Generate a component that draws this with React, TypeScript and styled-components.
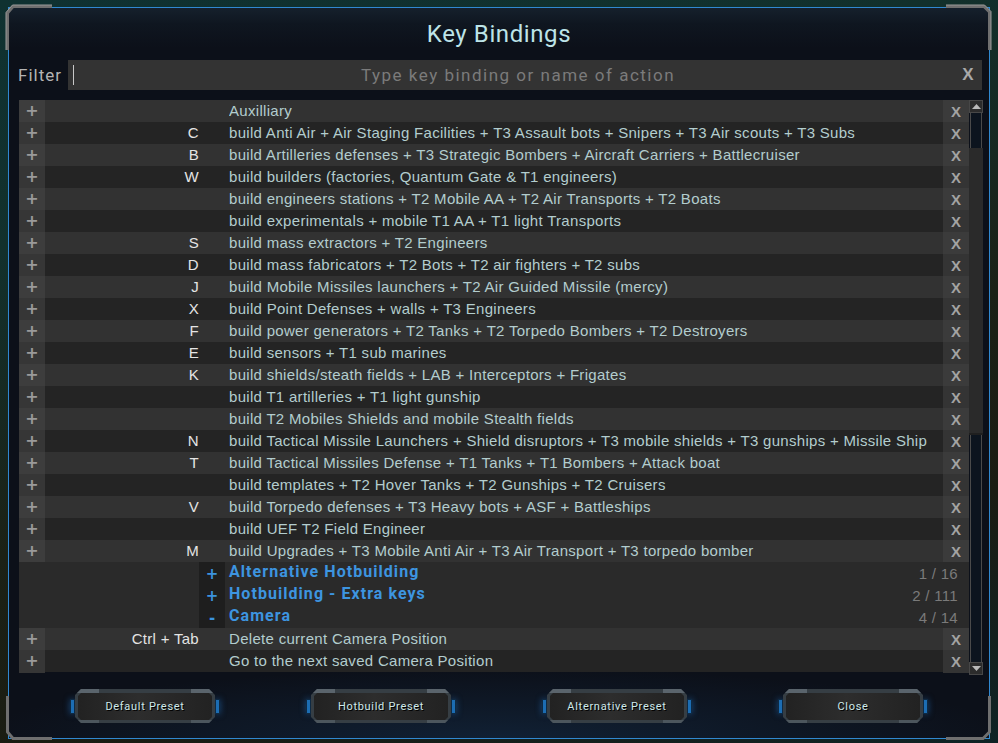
import React from 'react';
import styled, { createGlobalStyle } from 'styled-components';

const Global = createGlobalStyle`
  html, body { margin: 0; padding: 0; }
  body { background: #0f2628; overflow: hidden; }
  * { box-sizing: border-box; }
`;

const Screen = styled.div`
  position: relative;
  width: 998px;
  height: 743px;
  padding: 7px 8px 4px 8px;
  background: linear-gradient(165deg, #0f3131 0%, #12302c 25%, #1b2116 55%, #1a1c12 75%, #0e2325 100%);
  font-family: 'Liberation Sans', Arial, sans-serif;
`;

const Panel = styled.div`
  width: 982px;
  height: 732px;
  border: 1px solid #3088d0;
  background:
    radial-gradient(ellipse 520px 70px at 50% 100%, rgba(22, 52, 84, 0.45), transparent),
    linear-gradient(180deg, #15202c 0px, #0f1620 16px, #0c1019 40px, #0c1019 100%);
  display: flex;
  flex-direction: column;
`;

const Title = styled.div`
  height: 52px;
  display: flex;
  align-items: center;
  justify-content: center;
  padding-bottom: 1px;
  font-family: Roboto, 'Noto Sans', sans-serif;
  font-size: 24px;
  font-weight: 400;
  color: #bde4e8;
  letter-spacing: 0.6px;
`;

const FilterRow = styled.div`
  height: 30px;
  display: flex;
  align-items: stretch;
  padding-left: 9px;
  margin-right: 7px;
  margin-bottom: 10px;
`;

const FilterLabel = styled.div`
  width: 50px;
  display: flex;
  align-items: center;
  font-family: Roboto, 'Noto Sans', sans-serif;
  font-size: 17px;
  letter-spacing: 1px;
  color: #b4b4b4;
`;

const FilterBox = styled.div`
  flex: 1;
  background: #333333;
  display: grid;
  grid-template-columns: 14px 1fr 28px;
  align-items: center;
`;

const Caret = styled.div`
  width: 1px;
  height: 20px;
  margin-left: 5px;
  background: #c8c8c8;
`;

const Placeholder = styled.div`
  text-align: center;
  font-family: Roboto, 'Noto Sans', sans-serif;
  font-size: 17px;
  letter-spacing: 1.5px;
  color: #7b7b7b;
`;

const ClearX = styled.div`
  text-align: center;
  font-family: 'Liberation Sans', Arial, sans-serif;
  font-weight: 700;
  font-size: 17px;
  color: #a9a9a9;
`;

const ListArea = styled.div`
  height: 572px;
  margin-left: 10px;
  margin-right: 6px;
  display: flex;
  align-items: flex-start;
`;

const Rows = styled.div`
  width: 950px;
  display: flex;
  flex-direction: column;
`;

const Row = styled.div<{ $light: boolean }>`
  height: 22px;
  display: grid;
  grid-template-columns: 26px 154px 30px 1fr 26px;
  align-items: stretch;
  background: ${(p) => (p.$light ? '#323232' : '#242424')};
  font-size: 15px;
  line-height: 22px;
  letter-spacing: 0.3px;
`;

const PlusCell = styled.div<{ $light: boolean }>`
  background: ${(p) => (p.$light ? '#3d3d3d' : '#363636')};
  color: #9a9a9a;
  font-family: 'DejaVu Sans', sans-serif;
  font-weight: 700;
  font-size: 16px;
  line-height: 22px;
  text-align: center;
  letter-spacing: 0;
`;

const KeyCell = styled.div`
  text-align: right;
  color: #e4e4e4;
  white-space: nowrap;
`;

const ActionCell = styled.div`
  color: #b3cdce;
  white-space: nowrap;
  overflow: hidden;
`;

const XCell = styled.div<{ $light: boolean }>`
  background: ${(p) => (p.$light ? '#3b3b3b' : '#343434')};
  color: #a3a3a3;
  font-weight: 700;
  font-size: 15px;
  line-height: 23px;
  text-align: center;
  letter-spacing: 0;
`;

const CatRow = styled.div`
  height: 22px;
  display: grid;
  grid-template-columns: 180px 26px 1fr auto;
  background: #2a2a2a;
`;

const CatSign = styled.div`
  background: #1e1e1e;
  color: #3b93de;
  font-family: 'DejaVu Sans', sans-serif;
  font-weight: 700;
  font-size: 15px;
  line-height: 24px;
  text-align: center;
`;

const CatName = styled.div`
  padding-left: 4px;
  color: #3d95e0;
  font-family: Roboto, 'Noto Sans', sans-serif;
  font-weight: 700;
  font-size: 16px;
  letter-spacing: 1.05px;
  line-height: 20px;
`;

const CatCount = styled.div`
  padding-right: 11px;
  color: #7a7a7a;
  font-size: 15px;
  letter-spacing: 0.3px;
  line-height: 24px;
`;

const Scrollbar = styled.div`
  width: 14px;
  height: 575px;
  display: flex;
  flex-direction: column;
`;

const ArrowBtn = styled.div`
  height: 13px;
  background: #2c2c2c;
  border: 1px solid #474747;
  display: flex;
  align-items: center;
  justify-content: center;
`;

const Track = styled.div`
  flex: 1;
  display: flex;
  flex-direction: column;
`;

const TrackGap = styled.div<{ $grow?: boolean }>`
  height: ${(p) => (p.$grow ? 'auto' : '35px')};
  flex: ${(p) => (p.$grow ? 1 : 'none')};
  margin: 0 1px;
  border-left: 1px solid #4a4a4a;
  border-right: 1px solid #4a4a4a;
  background: #0c141e;
`;

const Thumb = styled.div`
  height: 287px;
  background: #2a2a2a;
  border-bottom: 2px solid #1f1f1f;
`;

const Footer = styled.div`
  flex: 1;
  display: flex;
  align-items: flex-start;
  padding-top: 17px;
  padding-left: 61px;
  gap: 86px;
`;

const Btn = styled.div`
  width: 150px;
  height: 34px;
  display: flex;
  align-items: center;
`;

const BlueTab = styled.div`
  width: 5px;
  height: 15px;
  background: #1c6db3;
  border: 1px solid #0e2a44;
  box-shadow: 0 0 6px rgba(40, 130, 220, 0.5);
`;

const Frame = styled.div`
  flex: 1;
  height: 34px;
  padding: 4px 3px 3px 3px;
  clip-path: polygon(6px 0, calc(100% - 6px) 0, 100% 6px, 100% calc(100% - 6px), calc(100% - 6px) 100%, 6px 100%, 0 calc(100% - 6px), 0 6px);
  background:
    linear-gradient(90deg, #5a646c 0 24px, transparent 24px calc(100% - 24px), #5a646c calc(100% - 24px)) top / 100% 4px no-repeat,
    linear-gradient(90deg, #4c565d 0 24px, transparent 24px calc(100% - 24px), #4c565d calc(100% - 24px)) bottom / 100% 3px no-repeat,
    #363e44;
`;

const FrameInner = styled.div`
  height: 100%;
  clip-path: polygon(3px 0, calc(100% - 3px) 0, 100% 3px, 100% calc(100% - 3px), calc(100% - 3px) 100%, 3px 100%, 0 calc(100% - 3px), 0 3px);
  background: linear-gradient(90deg, #222 0%, #2d2d2d 45%, #2b2b2b 55%, #222 100%);
  display: flex;
  align-items: center;
  justify-content: center;
  font-family: Roboto, 'Noto Sans', sans-serif;
  font-size: 11px;
  letter-spacing: 0.7px;
  color: #cfe9ea;
  text-shadow: 1px 1px 0 #000;
`;

const Corners = styled.svg`
  position: absolute;
  left: 0;
  top: 0;
  pointer-events: none;
`;

type R = [string, string];
const rows: R[] = [
  ['', 'Auxilliary'],
  ['C', 'build Anti Air + Air Staging Facilities + T3 Assault bots + Snipers + T3 Air scouts + T3 Subs'],
  ['B', 'build Artilleries defenses + T3 Strategic Bombers + Aircraft Carriers + Battlecruiser'],
  ['W', 'build builders (factories, Quantum Gate & T1 engineers)'],
  ['', 'build engineers stations + T2 Mobile AA + T2 Air Transports + T2 Boats'],
  ['', 'build experimentals + mobile T1 AA + T1 light Transports'],
  ['S', 'build mass extractors + T2 Engineers'],
  ['D', 'build mass fabricators + T2 Bots + T2 air fighters + T2 subs'],
  ['J', 'build Mobile Missiles launchers + T2 Air Guided Missile (mercy)'],
  ['X', 'build Point Defenses + walls + T3 Engineers'],
  ['F', 'build power generators + T2 Tanks + T2 Torpedo Bombers + T2 Destroyers'],
  ['E', 'build sensors + T1 sub marines'],
  ['K', 'build shields/steath fields + LAB + Interceptors + Frigates'],
  ['', 'build T1 artilleries + T1 light gunship'],
  ['', 'build T2 Mobiles Shields and mobile Stealth fields'],
  ['N', 'build Tactical Missile Launchers + Shield disruptors + T3 mobile shields + T3 gunships + Missile Ship'],
  ['T', 'build Tactical Missiles Defense + T1 Tanks + T1 Bombers + Attack boat'],
  ['', 'build templates + T2 Hover Tanks + T2 Gunships + T2 Cruisers'],
  ['V', 'build Torpedo defenses + T3 Heavy bots + ASF + Battleships'],
  ['', 'build UEF T2 Field Engineer'],
  ['M', 'build Upgrades + T3 Mobile Anti Air + T3 Air Transport + T3 torpedo bomber'],
];

const cats: [string, string, string][] = [
  ['+', 'Alternative Hotbuilding', '1 / 16'],
  ['+', 'Hotbuilding - Extra keys', '2 / 111'],
  ['-', 'Camera', '4 / 14'],
];

const tail: R[] = [
  ['Ctrl + Tab', 'Delete current Camera Position'],
  ['', 'Go to the next saved Camera Position'],
];

const buttons = ['Default Preset', 'Hotbuild Preset', 'Alternative Preset', 'Close'];

function BindingRow({ k, a, light }: { k: string; a: string; light: boolean }) {
  return (
    <Row $light={light}>
      <PlusCell $light={light}>+</PlusCell>
      <KeyCell>{k}</KeyCell>
      <div />
      <ActionCell>{a}</ActionCell>
      <XCell $light={light}>X</XCell>
    </Row>
  );
}

export default function App() {
  return (
    <>
      <Global />
      <Screen>
        <Panel>
          <Title>Key Bindings</Title>
          <FilterRow>
            <FilterLabel>Filter</FilterLabel>
            <FilterBox>
              <Caret />
              <Placeholder>Type key binding or name of action</Placeholder>
              <ClearX>X</ClearX>
            </FilterBox>
          </FilterRow>
          <ListArea>
            <Rows>
              {rows.map(([k, a], i) => (
                <BindingRow key={i} k={k} a={a} light={i % 2 === 0} />
              ))}
              {cats.map(([s, n, c]) => (
                <CatRow key={n}>
                  <div />
                  <CatSign>{s}</CatSign>
                  <CatName>{n}</CatName>
                  <CatCount>{c}</CatCount>
                </CatRow>
              ))}
              {tail.map(([k, a], i) => (
                <BindingRow key={'t' + i} k={k} a={a} light={i % 2 === 0} />
              ))}
            </Rows>
            <Scrollbar>
              <ArrowBtn>
                <svg width="9" height="5" viewBox="0 0 9 5"><path d="M0 5 L4.5 0 L9 5 Z" fill="#b9b9b9" /></svg>
              </ArrowBtn>
              <Track>
                <TrackGap />
                <Thumb />
                <TrackGap $grow />
              </Track>
              <ArrowBtn>
                <svg width="9" height="5" viewBox="0 0 9 5"><path d="M0 0 L4.5 5 L9 0 Z" fill="#b9b9b9" /></svg>
              </ArrowBtn>
            </Scrollbar>
          </ListArea>
          <Footer>
            {buttons.map((b) => (
              <Btn key={b}>
                <BlueTab />
                <Frame>
                  <FrameInner>{b}</FrameInner>
                </Frame>
                <BlueTab />
              </Btn>
            ))}
          </Footer>
        </Panel>
        <Corners width="998" height="743" viewBox="0 0 998 743">
          <g fill="none" strokeWidth="3" stroke="#6f6f6f">
            <path d="M7.5 50 L7.5 13 L13 6.5 L52 6.5" />
            <path d="M946 6.5 L984 6.5 L989.5 12 L989.5 50" />
            <path d="M7.5 696 L7.5 732 L13 738.5 L52 738.5" />
            <path d="M946 738.5 L983 738.5 L989.5 732 L989.5 696" />
          </g>
          <g fill="none" strokeWidth="1" stroke="#9a9a9a">
            <path d="M6 50 L6 12.5 L12.5 5 L52 5" />
            <path d="M946 5 L984.5 5 L991 11.5 L991 50" />
          </g>
        </Corners>
      </Screen>
    </>
  );
}
